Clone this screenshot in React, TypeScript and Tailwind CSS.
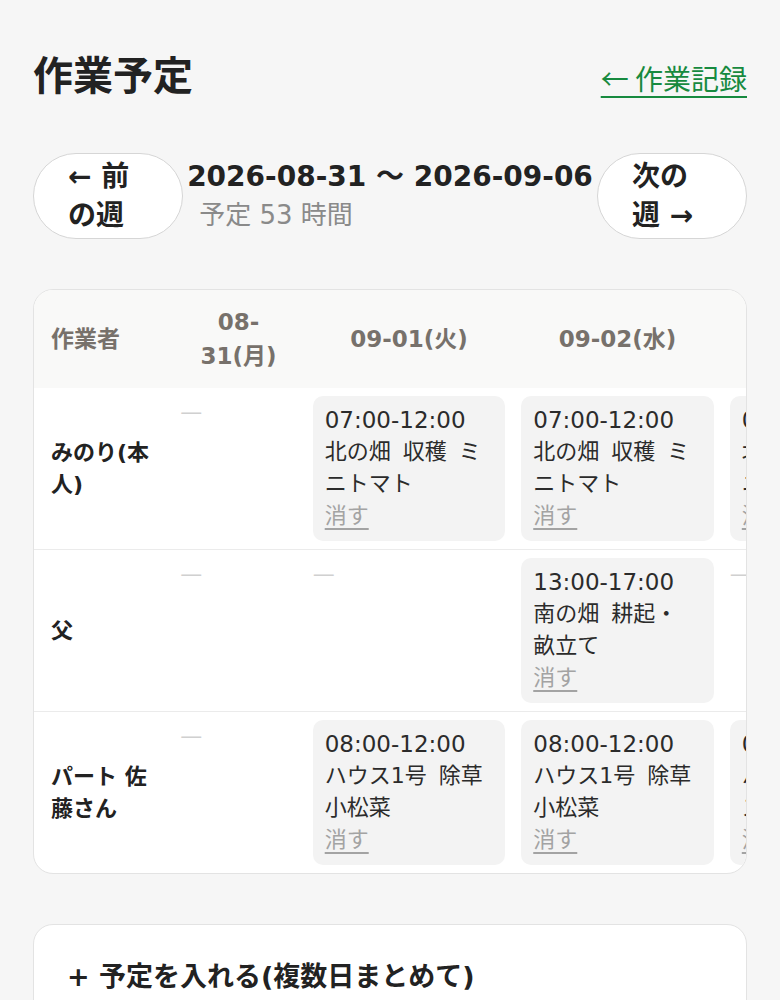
import React from "react";

type Entry = {
  time: string;
  text: string;
};

type Row = {
  name: string;
  cells: (Entry | null)[];
};

const days = ["08-31(月)", "09-01(火)", "09-02(水)", "09-03(木)", "09-04(金)", "09-05(土)", "09-06(日)"];

const harvest: Entry = { time: "07:00-12:00", text: "北の畑 収穫 ミニトマト" };
const weeding: Entry = { time: "08:00-12:00", text: "ハウス1号 除草 小松菜" };

const rows: Row[] = [
  { name: "みのり(本人)", cells: [null, harvest, harvest, harvest, harvest, null, null] },
  {
    name: "父",
    cells: [null, null, { time: "13:00-17:00", text: "南の畑 耕起・畝立て" }, null, null, null, null],
  },
  {
    name: "パート 佐藤さん",
    cells: [null, weeding, weeding, { time: "08:00-12:00", text: "ハウス1号 ハウス2号 灌水" }, null, null, null],
  },
];

function PlanCard({ entry }: { entry: Entry }) {
  return (
    <div className="rounded-[10px] bg-[#f3f3f3] pb-[9px] pl-3 pr-[18px] pt-2 text-[22px] leading-[32px] text-[#2b2b2b]">
      <div className="text-[23px]">{entry.time}</div>
      <div className="[word-spacing:5px]">{entry.text}</div>
      <button className="text-[#a3a3a3] underline underline-offset-[5px]">消す</button>
    </div>
  );
}

export default function App() {
  return (
    <div className="min-h-screen bg-[#f6f6f6] px-[33px] pt-[52px] font-['DejaVu_Sans','Noto_Sans_CJK_JP',sans-serif] text-[#222]">
      {/* 見出し */}
      <div className="flex items-baseline justify-between">
        <h1 className="text-[40px] font-bold leading-[48px]">作業予定</h1>
        <a
          href="#"
          className="font-['Noto_Sans_CJK_JP',sans-serif] text-[28px] text-[#178a3f] underline underline-offset-[6px]"
        >
          ← 作業記録
        </a>
      </div>

      {/* 週の切り替え */}
      <div className="mt-[53px] flex items-center justify-between">
        <button className="w-[150px] rounded-full border border-[#d6d6d6] bg-white px-[34px] py-[3px] text-left text-[28px] font-bold leading-[39px]">
          ← 前の週
        </button>
        <div className="flex flex-col">
          <div className="whitespace-nowrap text-[28px] font-bold leading-[39px]">2026-08-31 〜 2026-09-06</div>
          <div className="ml-3 text-[26px] leading-[39px] text-[#8a8a8a]">予定 53 時間</div>
        </div>
        <button className="w-[150px] rounded-full border border-[#d6d6d6] bg-white px-[34px] py-[3px] text-left text-[28px] font-bold leading-[39px]">
          次の週 →
        </button>
      </div>

      {/* 予定表 */}
      <div className="mt-[50px] overflow-hidden rounded-[20px] border border-[#e3e3e3] bg-white">
        <table className="w-[1522px] table-fixed border-collapse">
          <colgroup>
            <col className="w-[138px]" />
            <col className="w-[132px]" />
            {days.slice(1).map((d) => (
              <col key={d} className="w-[208px]" />
            ))}
          </colgroup>
          <thead>
            <tr className="bg-[#f9f9f8] text-[23px] font-bold leading-[34px] text-[#77716b]">
              <th className="h-[98px] pl-[17px] text-left">作業者</th>
              {days.map((d) => (
                <th key={d} className="px-2 text-center">
                  {d}
                </th>
              ))}
            </tr>
          </thead>
          <tbody>
            {rows.map((row, i) => (
              <tr key={row.name} className={i < rows.length - 1 ? "border-b border-[#ebebeb]" : ""}>
                <td className="pl-[17px] pr-[17px] align-middle text-[22px] font-bold leading-[32px] text-[#222]">
                  {row.name}
                </td>
                {row.cells.map((c, j) => (
                  <td key={j} className="p-2 align-top">
                    {c ? (
                      <PlanCard entry={c} />
                    ) : (
                      <div className="text-[22px] leading-[32px] text-[#d0d0d0]">—</div>
                    )}
                  </td>
                ))}
              </tr>
            ))}
          </tbody>
        </table>
      </div>

      {/* 予定を入れる */}
      <div className="mt-[50px] rounded-[20px] border border-[#e3e3e3] bg-white px-[33px] pb-[40px] pt-[33px]">
        <div className="text-[27px] font-bold leading-[38px]">+ 予定を入れる(複数日まとめて)</div>
        <div className="mt-6 h-[60px] rounded-[10px] border border-[#e3e3e3]" />
      </div>
    </div>
  );
}
